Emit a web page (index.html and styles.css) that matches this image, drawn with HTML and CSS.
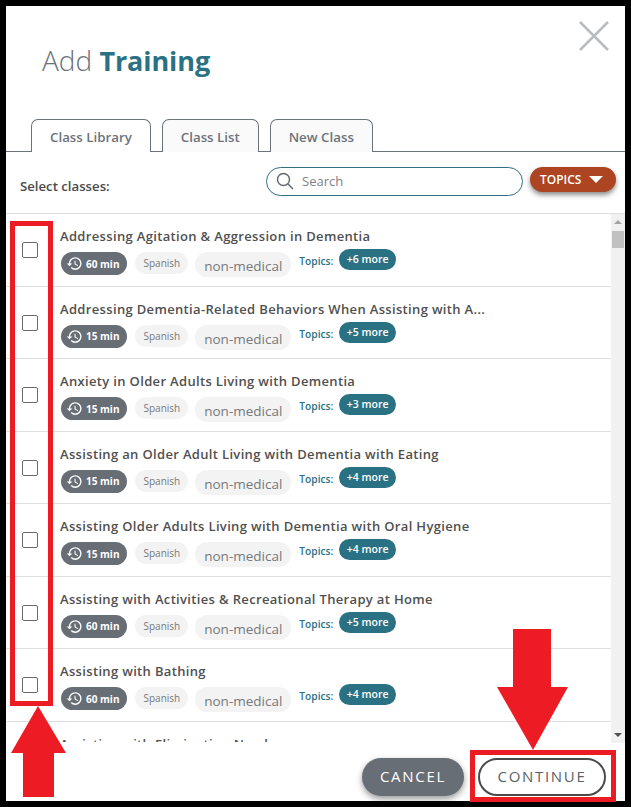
FILE: index.html
```html
<!doctype html>
<html>

<head>
    <link rel="stylesheet" href="styles.css">
</head>

<body>
    <div class="modal">
        <svg class="close" width="30" height="30" viewBox="0 0 30 30">
            <path d="M1 1L29 29M29 1L1 29" />
        </svg>
        <h1 class="title">Add <b>Training</b></h1>

        <div class="tabs">
            <div class="tab active">Class Library</div>
            <div class="tab">Class List</div>
            <div class="tab">New Class</div>
        </div>

        <div class="toolbar">
            <div class="select-label">Select classes:</div>
            <div class="search">
                <svg width="18" height="18" viewBox="0 0 18 18">
                    <circle cx="7.5" cy="7.5" r="6" />
                    <path d="M12 12L17 17" />
                </svg>
                <span>Search</span>
            </div>
            <div class="topics-btn">TOPICS <i class="caret"></i></div>
        </div>

        <div class="list-wrap">
            <div class="list">
                <div class="row">
                    <div class="check"></div>
                    <div class="info">
                        <div class="name">Addressing Agitation &amp; Aggression in Dementia</div>
                        <div class="meta">
                            <span class="time"><svg viewBox="0 0 24 24"><path d="M13 3a9 9 0 0 0-9 9H1l3.89 3.89.07.14L9 12H6c0-3.87 3.13-7 7-7s7 3.13 7 7-3.13 7-7 7c-1.93 0-3.68-.79-4.94-2.06l-1.42 1.42A8.954 8.954 0 0 0 13 21a9 9 0 0 0 0-18zm-1 5v5l4.28 2.54.72-1.21-3.5-2.08V8H12z"/></svg>60 min</span>
                            <span class="lang">Spanish</span>
                            <span class="kind">non-medical</span>
                            <span class="topics">Topics:</span>
                            <span class="more">+6 more</span>
                        </div>
                    </div>
                </div>
                <div class="row">
                    <div class="check"></div>
                    <div class="info">
                        <div class="name">Addressing Dementia-Related Behaviors When Assisting with A...</div>
                        <div class="meta">
                            <span class="time"><svg viewBox="0 0 24 24"><path d="M13 3a9 9 0 0 0-9 9H1l3.89 3.89.07.14L9 12H6c0-3.87 3.13-7 7-7s7 3.13 7 7-3.13 7-7 7c-1.93 0-3.68-.79-4.94-2.06l-1.42 1.42A8.954 8.954 0 0 0 13 21a9 9 0 0 0 0-18zm-1 5v5l4.28 2.54.72-1.21-3.5-2.08V8H12z"/></svg>15 min</span>
                            <span class="lang">Spanish</span>
                            <span class="kind">non-medical</span>
                            <span class="topics">Topics:</span>
                            <span class="more">+5 more</span>
                        </div>
                    </div>
                </div>
                <div class="row">
                    <div class="check"></div>
                    <div class="info">
                        <div class="name">Anxiety in Older Adults Living with Dementia</div>
                        <div class="meta">
                            <span class="time"><svg viewBox="0 0 24 24"><path d="M13 3a9 9 0 0 0-9 9H1l3.89 3.89.07.14L9 12H6c0-3.87 3.13-7 7-7s7 3.13 7 7-3.13 7-7 7c-1.93 0-3.68-.79-4.94-2.06l-1.42 1.42A8.954 8.954 0 0 0 13 21a9 9 0 0 0 0-18zm-1 5v5l4.28 2.54.72-1.21-3.5-2.08V8H12z"/></svg>15 min</span>
                            <span class="lang">Spanish</span>
                            <span class="kind">non-medical</span>
                            <span class="topics">Topics:</span>
                            <span class="more">+3 more</span>
                        </div>
                    </div>
                </div>
                <div class="row">
                    <div class="check"></div>
                    <div class="info">
                        <div class="name">Assisting an Older Adult Living with Dementia with Eating</div>
                        <div class="meta">
                            <span class="time"><svg viewBox="0 0 24 24"><path d="M13 3a9 9 0 0 0-9 9H1l3.89 3.89.07.14L9 12H6c0-3.87 3.13-7 7-7s7 3.13 7 7-3.13 7-7 7c-1.93 0-3.68-.79-4.94-2.06l-1.42 1.42A8.954 8.954 0 0 0 13 21a9 9 0 0 0 0-18zm-1 5v5l4.28 2.54.72-1.21-3.5-2.08V8H12z"/></svg>15 min</span>
                            <span class="lang">Spanish</span>
                            <span class="kind">non-medical</span>
                            <span class="topics">Topics:</span>
                            <span class="more">+4 more</span>
                        </div>
                    </div>
                </div>
                <div class="row">
                    <div class="check"></div>
                    <div class="info">
                        <div class="name">Assisting Older Adults Living with Dementia with Oral Hygiene</div>
                        <div class="meta">
                            <span class="time"><svg viewBox="0 0 24 24"><path d="M13 3a9 9 0 0 0-9 9H1l3.89 3.89.07.14L9 12H6c0-3.87 3.13-7 7-7s7 3.13 7 7-3.13 7-7 7c-1.93 0-3.68-.79-4.94-2.06l-1.42 1.42A8.954 8.954 0 0 0 13 21a9 9 0 0 0 0-18zm-1 5v5l4.28 2.54.72-1.21-3.5-2.08V8H12z"/></svg>15 min</span>
                            <span class="lang">Spanish</span>
                            <span class="kind">non-medical</span>
                            <span class="topics">Topics:</span>
                            <span class="more">+4 more</span>
                        </div>
                    </div>
                </div>
                <div class="row">
                    <div class="check"></div>
                    <div class="info">
                        <div class="name">Assisting with Activities &amp; Recreational Therapy at Home</div>
                        <div class="meta">
                            <span class="time"><svg viewBox="0 0 24 24"><path d="M13 3a9 9 0 0 0-9 9H1l3.89 3.89.07.14L9 12H6c0-3.87 3.13-7 7-7s7 3.13 7 7-3.13 7-7 7c-1.93 0-3.68-.79-4.94-2.06l-1.42 1.42A8.954 8.954 0 0 0 13 21a9 9 0 0 0 0-18zm-1 5v5l4.28 2.54.72-1.21-3.5-2.08V8H12z"/></svg>60 min</span>
                            <span class="lang">Spanish</span>
                            <span class="kind">non-medical</span>
                            <span class="topics">Topics:</span>
                            <span class="more">+5 more</span>
                        </div>
                    </div>
                </div>
                <div class="row">
                    <div class="check"></div>
                    <div class="info">
                        <div class="name">Assisting with Bathing</div>
                        <div class="meta">
                            <span class="time"><svg viewBox="0 0 24 24"><path d="M13 3a9 9 0 0 0-9 9H1l3.89 3.89.07.14L9 12H6c0-3.87 3.13-7 7-7s7 3.13 7 7-3.13 7-7 7c-1.93 0-3.68-.79-4.94-2.06l-1.42 1.42A8.954 8.954 0 0 0 13 21a9 9 0 0 0 0-18zm-1 5v5l4.28 2.54.72-1.21-3.5-2.08V8H12z"/></svg>60 min</span>
                            <span class="lang">Spanish</span>
                            <span class="kind">non-medical</span>
                            <span class="topics">Topics:</span>
                            <span class="more">+4 more</span>
                        </div>
                    </div>
                </div>
                <div class="row">
                    <div class="check"></div>
                    <div class="info">
                        <div class="name">Assisting with Elimination Needs</div>
                    </div>
                </div>
            </div>
            <div class="scrollbar">
                <i class="sb-up"></i>
                <div class="sb-thumb"></div>
                <i class="sb-down"></i>
            </div>
        </div>

        <div class="footer">
            <div class="btn cancel">CANCEL</div>
            <div class="btn continue">CONTINUE</div>
        </div>
    </div>

    <!-- red markup drawn over the screenshot -->
    <div class="mark mark-checks"></div>
    <div class="mark mark-continue"></div>
    <svg class="arrow arrow-up" width="56" height="92" viewBox="0 0 56 92">
        <polygon points="27,0 55,47 43,47 43,91 12,91 12,47 0,47" />
    </svg>
    <svg class="arrow arrow-down" width="72" height="122" viewBox="0 0 72 122">
        <polygon points="16,0 54,0 54,58 71,58 36,121 0,58 16,58" />
    </svg>
</body>

</html>
```

FILE: styles.css
```css
* {
    box-sizing: border-box;
    margin: 0;
    padding: 0;
}

body {
    width: 631px;
    height: 807px;
    overflow: hidden;
    position: relative;
    background: #000;
    font-family: 'Open Sans', sans-serif;
    color: #4a4a4a;
}

.modal {
    position: absolute;
    top: 6px;
    left: 6px;
    width: 619px;
    height: 795px;
    background: #fff;
    display: flex;
    flex-direction: column;
    overflow: hidden;
}

.close {
    position: absolute;
    top: 15px;
    left: 573px;
}

.close path {
    fill: none;
    stroke: #b9bbbd;
    stroke-width: 2.5;
}

.title {
    font-size: 28px;
    font-weight: 300;
    line-height: 38px;
    color: #6b727a;
    padding: 35px 0 0 36px;
    height: 113px;
}

.title b {
    font-size: 27px;
    font-weight: 700;
    letter-spacing: -0.1px;
    color: #2a7283;
}

.tabs {
    display: flex;
    gap: 11px;
    padding-left: 25px;
    height: 33px;
    border-bottom: 1px solid #6c737b;
}

.tab {
    height: 33px;
    padding: 0 18px;
    border: 1px solid #6c737b;
    border-bottom: none;
    border-radius: 7px 7px 0 0;
    background: #fafafa;
    font-size: 13.3px;
    font-weight: 600;
    line-height: 35px;
    color: #6c737b;
}

.tab.active {
    background: #fff;
    position: relative;
    height: 33px;
}

.toolbar {
    display: flex;
    align-items: flex-start;
    height: 62px;
    border-bottom: 1px solid #dedede;
    padding-top: 15px;
}

.select-label {
    font-size: 13.2px;
    font-weight: 600;
    color: #4a4a4a;
    margin: 10px 0 0 14px;
    width: 246px;
}

.search {
    width: 257px;
    height: 29px;
    border: 1px solid #2f6f80;
    border-radius: 15px;
    display: flex;
    align-items: center;
    padding: 0 0 2px 9px;
    gap: 8px;
    font-size: 13px;
    color: #7d8288;
}

.search svg {
    fill: none;
    stroke: #5f666d;
    stroke-width: 1.4;
}

.topics-btn {
    margin-left: 7px;
    width: 86px;
    height: 25px;
    background: #ad4522;
    border-radius: 13px;
    box-shadow: 0 3px 5px rgba(0, 0, 0, 0.45);
    color: #fff;
    font-size: 12px;
    font-weight: 600;
    line-height: 25px;
    padding-left: 10px;
    white-space: nowrap;
}

.caret {
    display: inline-block;
    width: 0;
    height: 0;
    border-left: 7px solid transparent;
    border-right: 7px solid transparent;
    border-top: 7px solid #fff;
    margin-left: 4px;
    vertical-align: 1px;
}

.list-wrap {
    display: flex;
    height: 529px;
}

.list {
    flex: 1;
    height: 528px;
    overflow: hidden;
}

.row {
    display: flex;
    height: 72.5px;
    border-bottom: 1px solid #dedede;
}

.check {
    width: 16px;
    height: 16px;
    border: 1px solid #6a6a6a;
    border-radius: 2px;
    background: #fff;
    margin: 28px 22px 0 16px;
}

.name {
    font-size: 13px;
    font-weight: 600;
    letter-spacing: 0.34px;
    line-height: 18px;
    color: #505050;
    margin-top: 13px;
    white-space: nowrap;
}

.meta {
    display: flex;
    align-items: flex-start;
    margin-top: 5px;
}

.time {
    display: flex;
    align-items: center;
    height: 23px;
    margin: 2px 8px 0 1px;
    padding: 0 8px 0 5px;
    background: #686e76;
    border-radius: 12px;
    color: #fff;
    font-size: 10px;
    font-weight: 700;
    white-space: nowrap;
}

.time svg {
    width: 17px;
    height: 17px;
    fill: #fff;
    margin-right: 3px;
}

.lang {
    height: 22px;
    margin: 2px 7px 0 0;
    padding: 0 8px;
    background: #f3f3f3;
    border-radius: 11px;
    color: #77797c;
    font-size: 10px;
    line-height: 22px;
}

.kind {
    height: 25px;
    margin: 2px 8px 0 0;
    padding: 0 9px;
    background: #f3f3f3;
    border-radius: 12px;
    color: #77797c;
    font-size: 13.5px;
    line-height: 28px;
}

.topics {
    font-size: 10.2px;
    font-weight: 600;
    color: #2a7283;
    line-height: 20px;
    margin: 1px 6px 0 0;
}

.more {
    height: 21px;
    margin-top: -1px;
    padding: 0 7.5px;
    background: #2a7283;
    border-radius: 11px;
    color: #fff;
    font-size: 10.5px;
    font-weight: 600;
    line-height: 20px;
    white-space: nowrap;
}

.scrollbar {
    width: 14px;
    height: 529px;
    background: #f1f1f1;
    position: relative;
}

.sb-thumb {
    position: absolute;
    top: 17px;
    left: 1px;
    width: 12px;
    height: 17px;
    background: #c1c1c1;
}

.sb-up,
.sb-down {
    position: absolute;
    left: 3px;
    width: 0;
    height: 0;
    border-left: 4px solid transparent;
    border-right: 4px solid transparent;
}

.sb-up {
    top: 6px;
    border-bottom: 4px solid #a3a3a3;
}

.sb-down {
    bottom: 6px;
    border-top: 4px solid #505050;
}

.footer {
    display: flex;
    gap: 14px;
    padding: 15px 0 0 356px;
}

.btn {
    height: 38px;
    border-radius: 19px;
    font-size: 15px;
    letter-spacing: 1.7px;
    line-height: 37px;
    text-align: center;
}

.cancel {
    width: 102px;
    background: #686e76;
    color: #fff;
    box-shadow: 0 3px 6px rgba(0, 0, 0, 0.4);
}

.continue {
    width: 128px;
    border: 2px solid #4a4a4a;
    background: #fff;
    color: #5c5f63;
    line-height: 33px;
}

.mark {
    position: absolute;
    border: 5px solid #ed1c24;
}

.mark-checks {
    left: 10px;
    top: 221px;
    width: 43px;
    height: 485px;
}

.mark-continue {
    left: 470px;
    top: 750px;
    width: 146px;
    height: 52px;
}

.arrow {
    position: absolute;
}

.arrow polygon {
    fill: #ed1c24;
}

.arrow-up {
    left: 11px;
    top: 706px;
}

.arrow-down {
    left: 497px;
    top: 629px;
}
```
